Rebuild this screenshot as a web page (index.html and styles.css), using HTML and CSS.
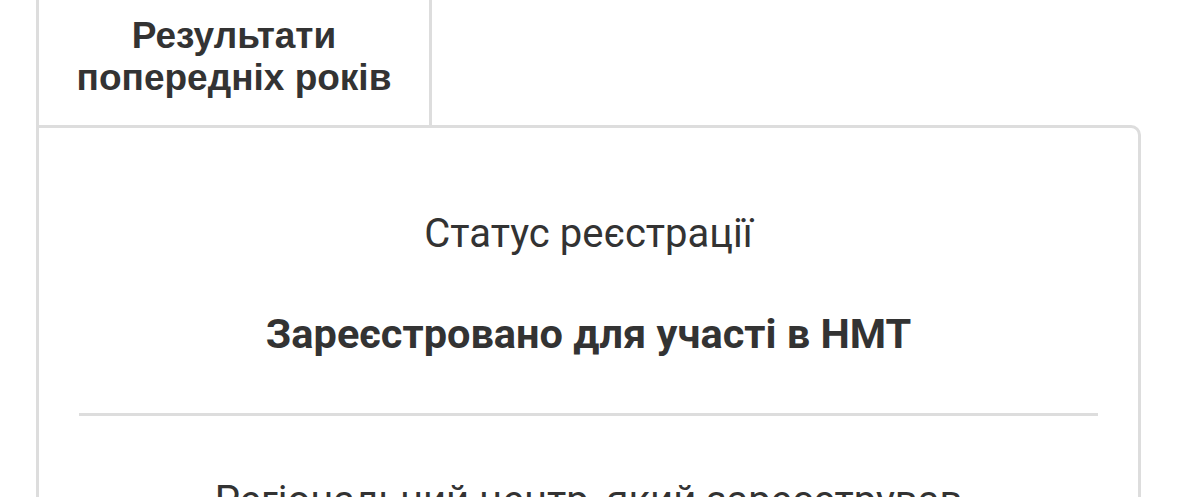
FILE: index.html
```
<!doctype html>
<html>
  <head>
    <meta name="viewport" content="width=device-width, initial-scale=1">
    <link rel="stylesheet" href="styles.css">
    <title>Результати НМТ</title>
  </head>
  <body>
    <div class="page">
      <ul class="tabs">
        <li class="tab">Результати попередніх років</li>
      </ul>
      <div class="panel">
        <div class="field">
          <p class="label">Статус реєстрації</p>
          <p class="value">Зареєстровано для участі в НМТ</p>
        </div>
        <hr>
        <div class="field">
          <p class="label">Регіональний центр, який зареєстрував</p>
        </div>
      </div>
    </div>
  </body>
</html>
```
FILE: styles.css
```
body {
  margin: 0;
  background: #fff;
  color: #333;
  font-family: "Liberation Sans", Arial, sans-serif;
}
.page {
  padding: 0 38px 0 36px;
}
.tabs {
  list-style: none;
  margin: 0;
  padding: 0;
  display: flex;
}
.tab {
  width: 390px;
  padding: 15px 0 26px;
  border: 3px solid #ddd;
  border-top: none;
  border-bottom: none;
  text-align: center;
  font-weight: bold;
  font-size: 37px;
  line-height: 42px;
}
.panel {
  border: 3px solid #ddd;
  border-top-right-radius: 10px;
  padding: 21px 40px 0;
}
.field {
  text-align: center;
  padding: 61px 0 55px;
}
.label {
  margin: 0;
  font-family: Roboto, sans-serif;
  font-size: 40px;
  line-height: 48px;
}
.value {
  margin: 52px 0 0;
  font-family: Roboto, sans-serif;
  font-weight: bold;
  font-size: 41.5px;
  line-height: 48px;
}
hr {
  margin: 0;
  border: none;
  border-top: 3px solid #ddd;
}
```
